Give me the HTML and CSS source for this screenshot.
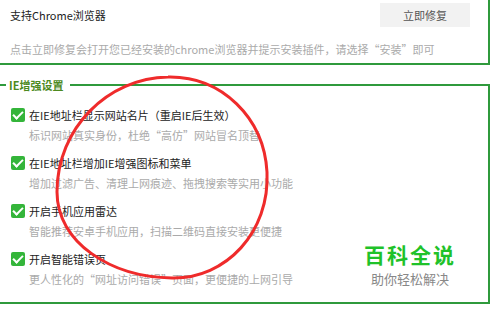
FILE: index.html
```html
<!DOCTYPE html>
<html lang="zh-CN">
<head>
    <meta charset="UTF-8">
    <meta name="viewport" content="width=device-width, initial-scale=1.0">
    <title>IE增强设置</title>
    <link rel="stylesheet" href="styles.css">
</head>
<body>
    <div class="page">
        <!-- Chrome 修复 -->
        <div class="box top-box">
            <div class="row">
                <span class="title">支持Chrome浏览器</span>
                <button class="fix-btn">立即修复</button>
            </div>
            <p class="desc">点击立即修复会打开您已经安装的chrome浏览器并提示安装插件，请选择“安装”即可</p>
        </div>

        <!-- IE增强设置 -->
        <fieldset class="box group">
            <legend>IE增强设置</legend>
            <div class="item">
                <div class="item-head"><span class="check"></span>在IE地址栏显示网站名片（重启IE后生效）</div>
                <p class="desc sub">标识网站真实身份，杜绝“高仿”网站冒名顶替</p>
            </div>
            <div class="item">
                <div class="item-head"><span class="check"></span>在IE地址栏增加IE增强图标和菜单</div>
                <p class="desc sub">增加过滤广告、清理上网痕迹、拖拽搜索等实用小功能</p>
            </div>
            <div class="item">
                <div class="item-head"><span class="check"></span>开启手机应用雷达</div>
                <p class="desc sub">智能推荐安卓手机应用，扫描二维码直接安装更便捷</p>
            </div>
            <div class="item">
                <div class="item-head"><span class="check"></span>开启智能错误页</div>
                <p class="desc sub">更人性化的“网址访问错误”页面，更便捷的上网引导</p>
            </div>
        </fieldset>
    </div>

    <!-- 水印 -->
    <div class="mark">
        <div class="mark-title">百科全说</div>
        <div class="mark-sub">助你轻松解决</div>
    </div>

    <!-- 红圈 -->
    <svg class="circle" width="500" height="315" viewBox="0 0 500 315">
        <path d="M168 77 C222 76 264 118 267 172 C270 232 226 279 172 278 C110 277 57 242 57 192 C57 128 108 78 168 77"
              fill="none" stroke="#ef2b2b" stroke-width="3"/>
    </svg>
</body>
</html>
```

FILE: styles.css
```css
body {
    margin: 0;
    font-family: "Noto Sans CJK SC", sans-serif;
    font-size: 11px;
    color: #333;
    background: #fff;
    overflow: hidden;
    position: relative;
    height: 315px;
}
.page {
    margin-left: -10px;
    width: 500px;
}
.box {
    border: 2px solid #2f9a3c;
}
.top-box {
    margin-top: -12px;
    padding: 13px 0 4px 18px;
}
.row {
    display: flex;
    align-items: center;
    justify-content: space-between;
    height: 24px;
    padding-right: 18px;
}
.title {
    color: #222;
}
.fix-btn {
    width: 90px;
    height: 24px;
    border: none;
    background: #f2f2f2;
    color: #555;
    font-family: inherit;
    font-size: 11px;
}
.desc {
    margin: 12px 0 0;
    line-height: 20px;
    color: #aaa;
}
.group {
    margin: 12px 0 0;
    padding: 12px 0 13px 19px;
    display: flex;
    flex-direction: column;
    gap: 8px;
}
.group legend {
    margin-left: -5px;
    padding: 0 7px 0 3px;
    line-height: 16px;
    font-weight: bold;
    color: #4d8a1f;
}
.item-head {
    display: flex;
    align-items: center;
    line-height: 20px;
    color: #222;
}
.check {
    width: 14px;
    height: 14px;
    margin-right: 4px;
    border-radius: 2px;
    background: #34b53a;
    position: relative;
}
.check::after {
    content: "";
    position: absolute;
    left: 4px;
    top: 1px;
    width: 4px;
    height: 8px;
    border: solid #fff;
    border-width: 0 2px 2px 0;
    transform: rotate(45deg);
}
.sub {
    margin: 0;
    padding-left: 18px;
}
/* 水印 */
.mark {
    position: absolute;
    left: 360px;
    top: 242px;
    width: 100px;
    text-align: center;
}
.mark-title {
    font-size: 21px;
    font-weight: bold;
    line-height: 24px;
    color: #1fc22a;
    letter-spacing: 2px;
}
.mark-sub {
    margin-top: 5px;
    font-size: 13px;
    line-height: 16px;
    color: #888;
}
.circle {
    position: absolute;
    left: 0;
    top: 0;
}
```
